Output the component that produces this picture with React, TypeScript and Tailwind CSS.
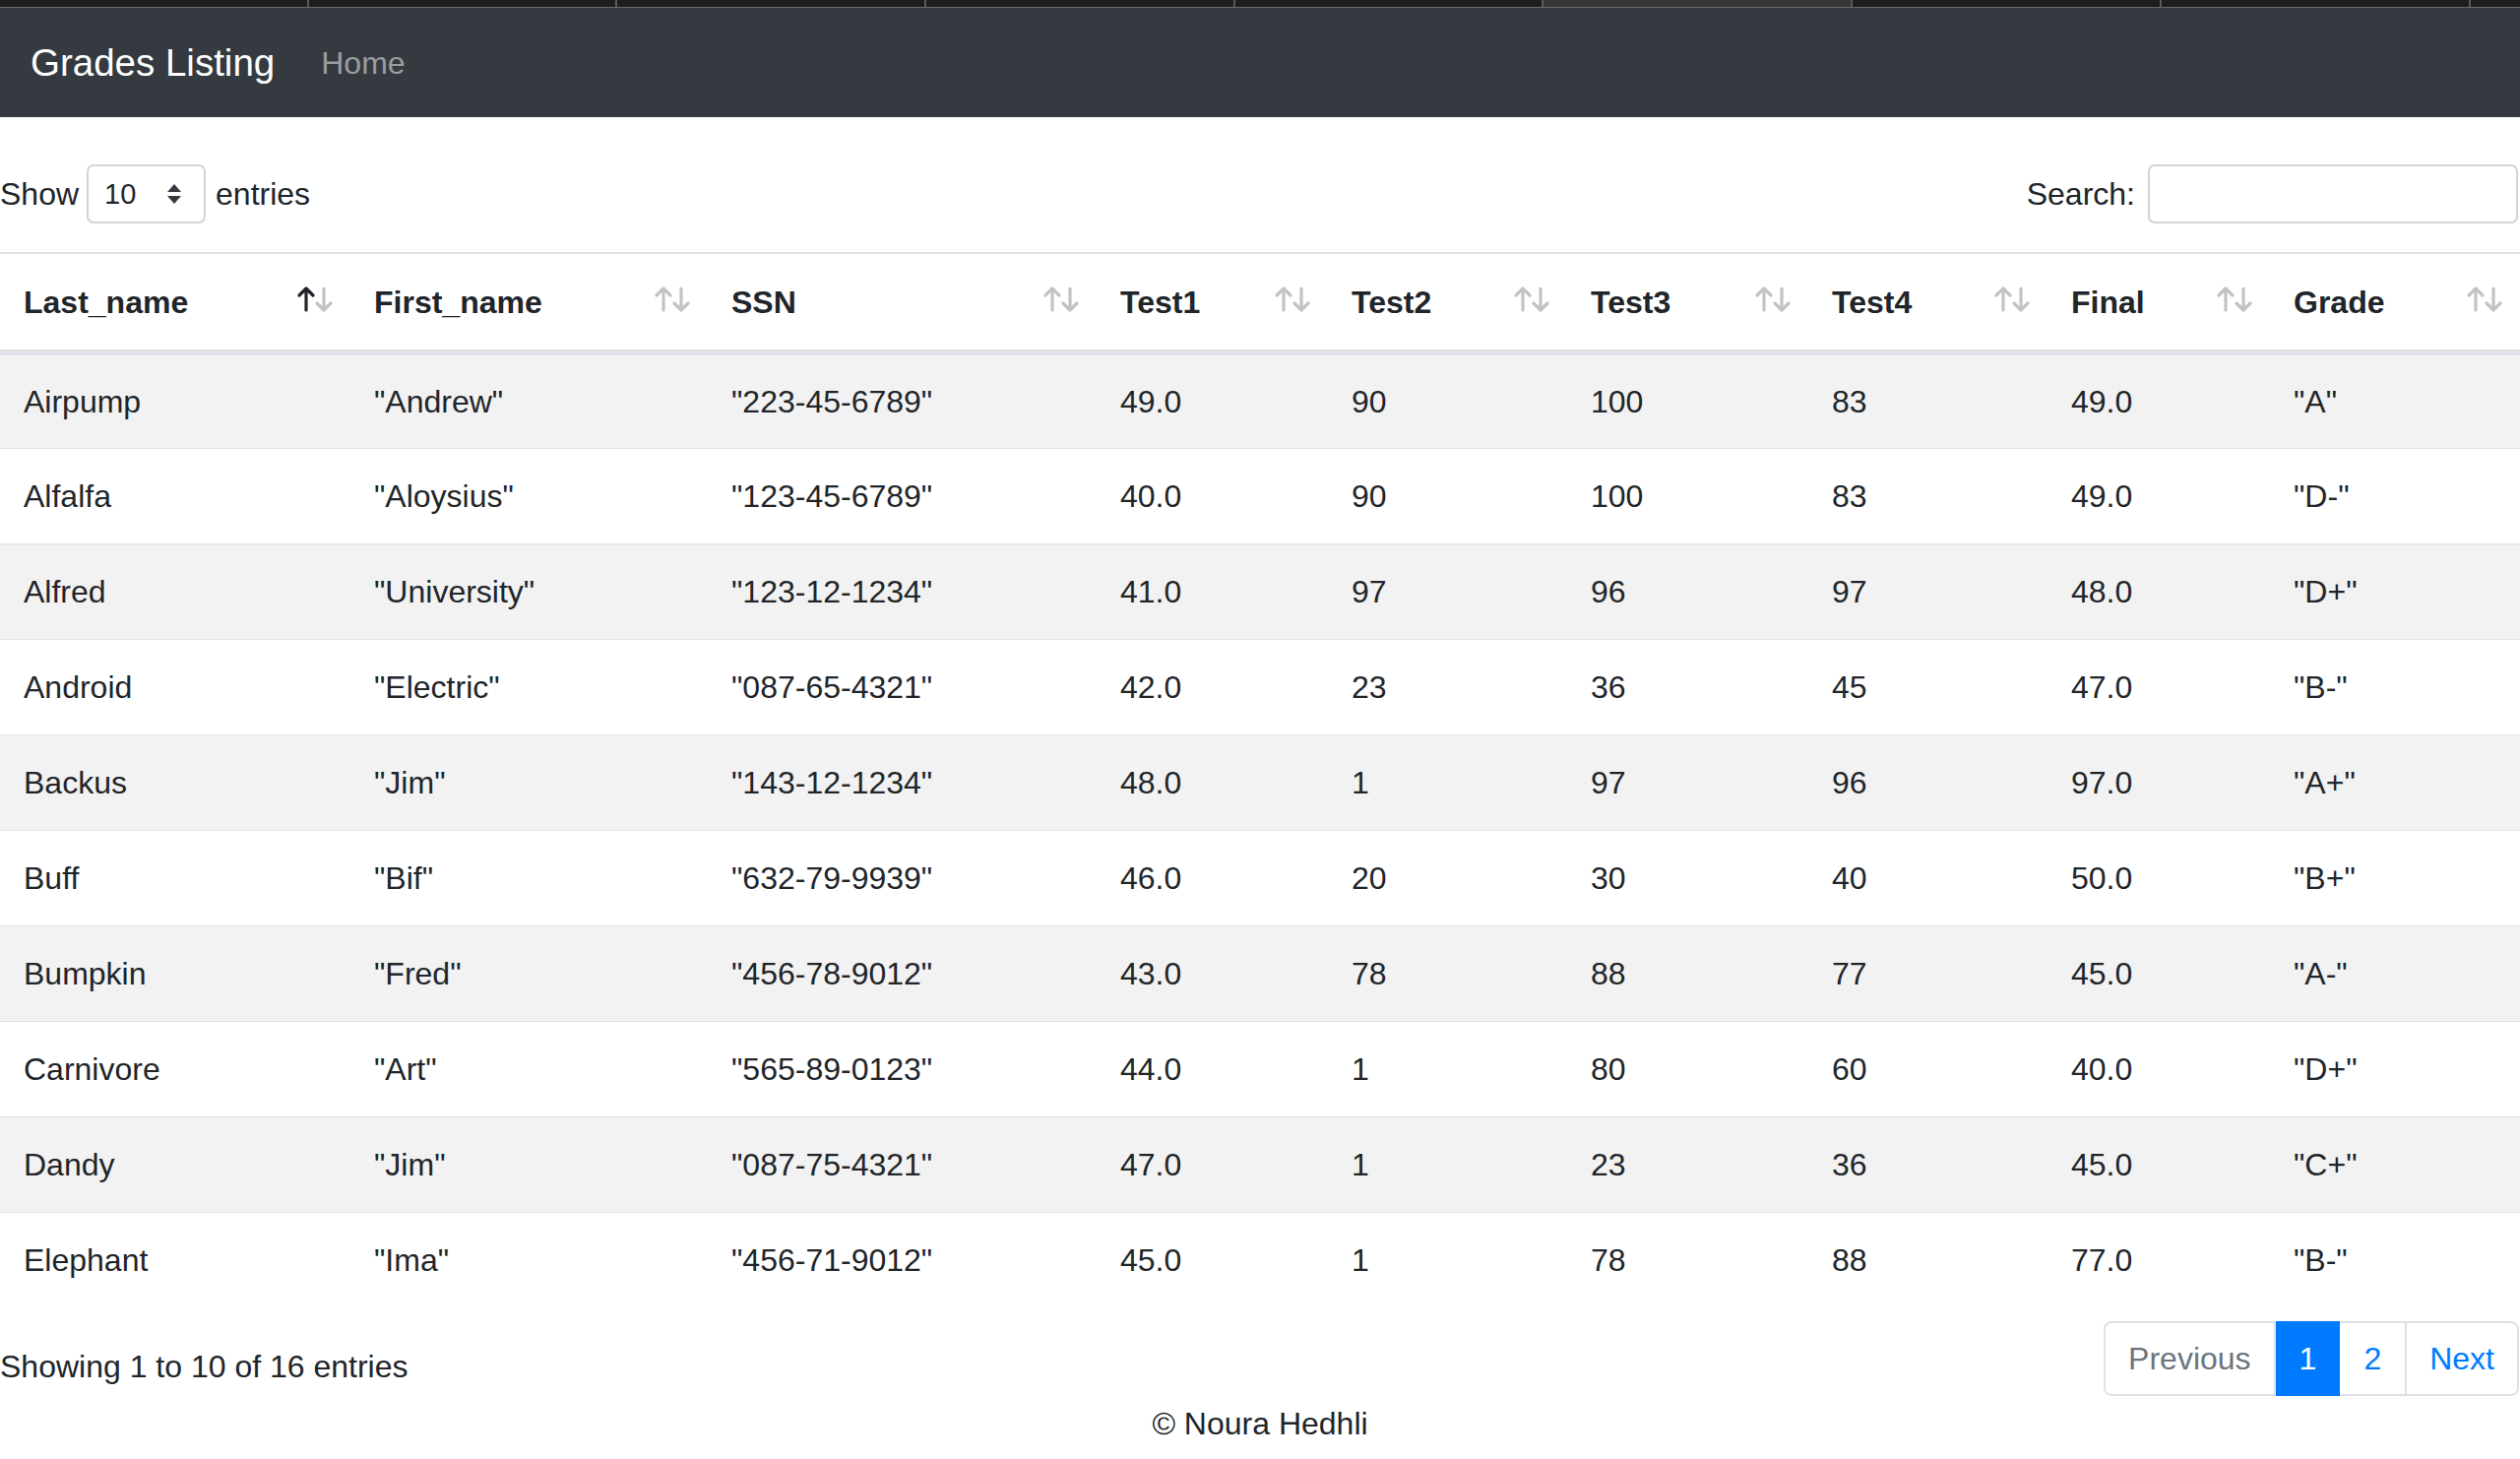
import React from "react";

const rows = [
  ["Airpump", '"Andrew"', '"223-45-6789"', "49.0", "90", "100", "83", "49.0", '"A"'],
  ["Alfalfa", '"Aloysius"', '"123-45-6789"', "40.0", "90", "100", "83", "49.0", '"D-"'],
  ["Alfred", '"University"', '"123-12-1234"', "41.0", "97", "96", "97", "48.0", '"D+"'],
  ["Android", '"Electric"', '"087-65-4321"', "42.0", "23", "36", "45", "47.0", '"B-"'],
  ["Backus", '"Jim"', '"143-12-1234"', "48.0", "1", "97", "96", "97.0", '"A+"'],
  ["Buff", '"Bif"', '"632-79-9939"', "46.0", "20", "30", "40", "50.0", '"B+"'],
  ["Bumpkin", '"Fred"', '"456-78-9012"', "43.0", "78", "88", "77", "45.0", '"A-"'],
  ["Carnivore", '"Art"', '"565-89-0123"', "44.0", "1", "80", "60", "40.0", '"D+"'],
  ["Dandy", '"Jim"', '"087-75-4321"', "47.0", "1", "23", "36", "45.0", '"C+"'],
  ["Elephant", '"Ima"', '"456-71-9012"', "45.0", "1", "78", "88", "77.0", '"B-"'],
];

const columns = [
  { name: "Last_name", width: "w-[356px]" },
  { name: "First_name", width: "w-[363px]" },
  { name: "SSN", width: "w-[395px]" },
  { name: "Test1", width: "w-[235px]" },
  { name: "Test2", width: "w-[243px]" },
  { name: "Test3", width: "w-[245px]" },
  { name: "Test4", width: "w-[243px]" },
  { name: "Final", width: "w-[226px]" },
  { name: "Grade", width: "w-[254px]" },
];

function SortIcon({ active }: { active: boolean }) {
  return (
    <svg width="38" height="28" viewBox="0 0 38 28" className="absolute right-[17px] top-[32px]">
      <g fill="none" strokeWidth="3.2" strokeLinecap="round" strokeLinejoin="round">
        <path d="M10 25V3M3 10l7-7 7 7" stroke={active ? "#212529" : "#c2c3c4"} />
        <path d="M28 3v22M21 18l7 7 7-7" stroke="#c2c3c4" />
      </g>
    </svg>
  );
}

function TabStrip() {
  return (
    <div className="flex h-[8px] border-b border-[#686868] bg-[#1e1e1e]">
      {Array.from({ length: 9 }).map((_, i) => (
        <div
          key={i}
          className={`${i === 5 ? "bg-[#393636]" : ""} h-full w-[313.7px] shrink-0 border-r-2 border-[#5a5a5a]`}
        />
      ))}
    </div>
  );
}

export default function App() {
  return (
    <div className="min-h-screen overflow-hidden bg-white font-['Liberation_Sans',Arial,sans-serif] text-[32px] leading-[48px] text-[#212529]">
      <TabStrip />
      <nav className="flex h-[111px] items-center bg-[#343a40] px-[31px]">
        <span className="text-[38.5px] leading-[60px] text-white">Grades Listing</span>
        <span className="ml-[47px] text-[#9a9da0]">Home</span>
      </nav>

      <div className="mt-[48px] flex h-[60px] items-center justify-between pr-[2px]">
        <div className="flex items-center">
          <span>Show</span>
          <div className="ml-[8px] flex h-[60px] w-[121px] items-center justify-between rounded-[7px] border-2 border-[#ced4da] pl-[16px] pr-[22px] text-[29px]">
            <span>10</span>
            <svg width="16" height="22" viewBox="0 0 16 22">
              <path d="M8 1L15 9H1z" fill="#343a40" />
              <path d="M8 21L15 13H1z" fill="#343a40" />
            </svg>
          </div>
          <span className="ml-[10px]">entries</span>
        </div>
        <div className="flex items-center">
          <span>Search:</span>
          <div className="ml-[13px] h-[60px] w-[376px] rounded-[7px] border-2 border-[#ced4da]" />
        </div>
      </div>

      <table className="mt-[29px] w-[2560px] table-fixed border-collapse">
        <colgroup>
          {columns.map((c) => (
            <col key={c.name} className={c.width} />
          ))}
        </colgroup>
        <thead>
          <tr className="border-t-2 border-b-[6px] border-[#dee2e6]">
            {columns.map((c, i) => (
              <th key={c.name} className="relative h-[101px] px-[24px] text-left font-bold">
                {c.name}
                <SortIcon active={i === 0} />
              </th>
            ))}
          </tr>
        </thead>
        <tbody>
          {rows.map((r, ri) => (
            <tr
              key={ri}
              className={`${ri % 2 === 0 ? "bg-[#f2f2f2]" : "bg-white"} border-t border-[#dee2e6] first:border-t-0`}
            >
              {r.map((cell, ci) => (
                <td key={ci} className="h-[97px] px-[24px]">
                  {cell}
                </td>
              ))}
            </tr>
          ))}
        </tbody>
      </table>

      <div className="flex items-start justify-between pr-[1px]">
        <div className="pt-[36px]">Showing 1 to 10 of 16 entries</div>
        <div className="mt-[14px] flex h-[76px] items-stretch leading-[40px]">
          <span className="flex items-center rounded-l-[8px] border-2 border-[#dee2e6] px-[23px] text-[#6c757d]">
            Previous
          </span>
          <span className="flex items-center bg-[#007bff] px-[24px] text-white">1</span>
          <span className="flex items-center border-y-2 border-[#dee2e6] px-[24px] text-[#007bff]">2</span>
          <span className="flex items-center rounded-r-[8px] border-2 border-[#dee2e6] px-[23px] text-[#007bff]">
            Next
          </span>
        </div>
      </div>

      <footer className="mt-[4px] text-center">© Noura Hedhli</footer>
    </div>
  );
}
